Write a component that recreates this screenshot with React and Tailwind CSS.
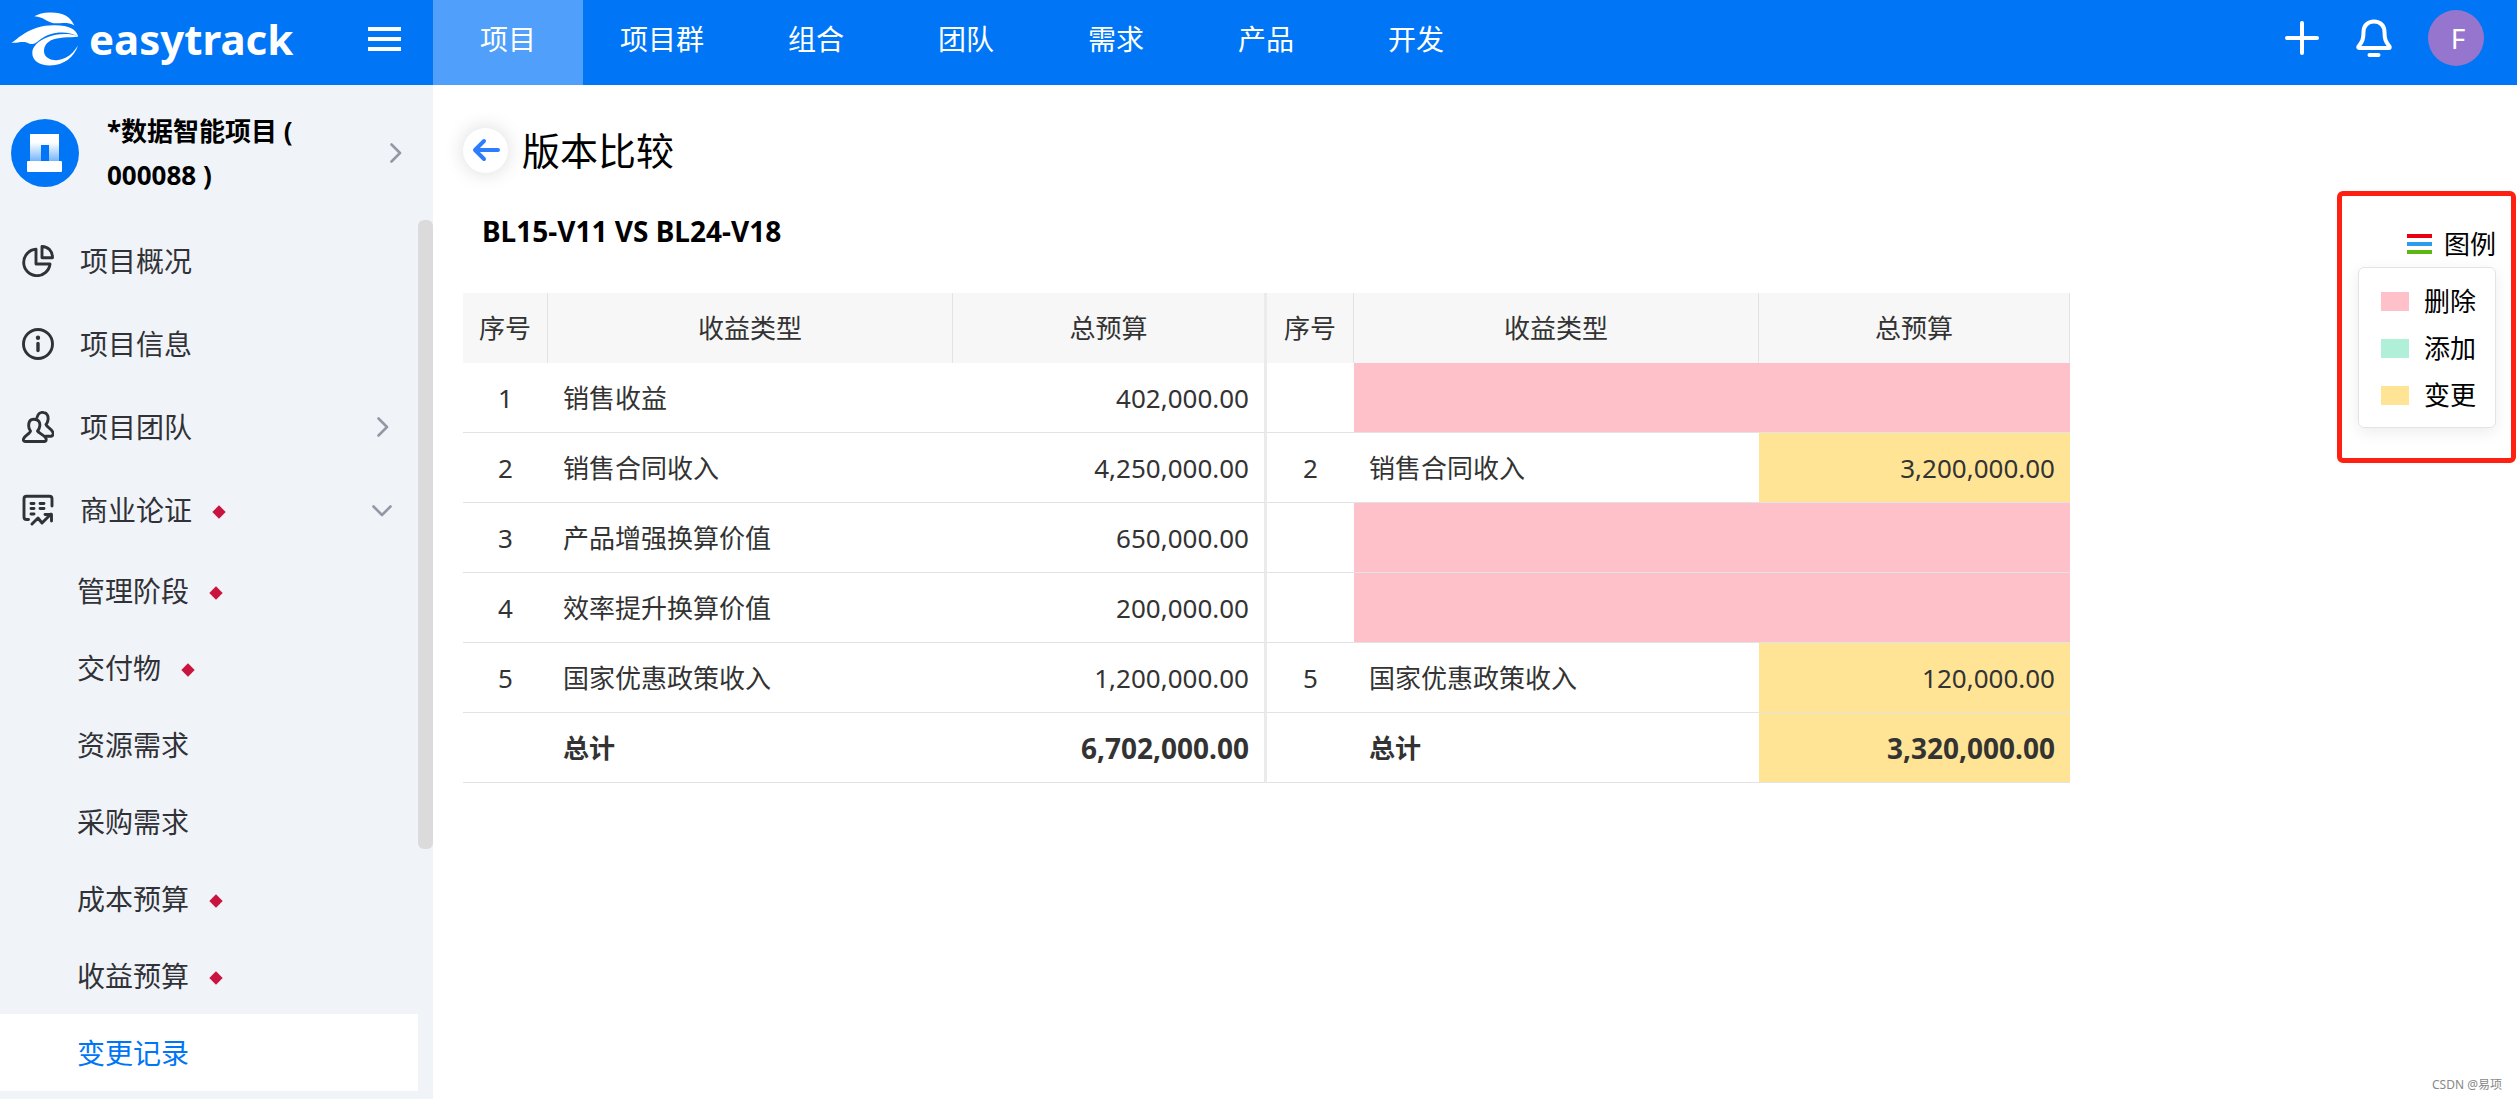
import { useState } from 'react';

const TABS = ['项目', '项目群', '组合', '团队', '需求', '产品', '开发'];

const SUB_ITEMS = [
  { label: '管理阶段', flagged: true },
  { label: '交付物', flagged: true },
  { label: '资源需求' },
  { label: '采购需求' },
  { label: '成本预算', flagged: true },
  { label: '收益预算', flagged: true },
  { label: '变更记录' },
];

const ROWS = [
  { no: 1, type: '销售收益', left: '402,000.00', state: 'deleted' },
  { no: 2, type: '销售合同收入', left: '4,250,000.00', right: '3,200,000.00', state: 'changed' },
  { no: 3, type: '产品增强换算价值', left: '650,000.00', state: 'deleted' },
  { no: 4, type: '效率提升换算价值', left: '200,000.00', state: 'deleted' },
  { no: 5, type: '国家优惠政策收入', left: '1,200,000.00', right: '120,000.00', state: 'changed' },
];

const LEGEND = [
  { label: '删除', color: 'bg-[#ffc1c9]' },
  { label: '添加', color: 'bg-[#b0f0d9]' },
  { label: '变更', color: 'bg-[#ffe496]' },
];

const LogoMark = () => (
  <svg viewBox="0 0 68 54" className="w-[68px] h-[54px]" fill="#fff" aria-hidden="true">
    <path d="M23.300 4.300C28 1.500 33 .3 40 .5 52 .7 59 4 63.300 13.500 60 11.500 57 11 53 11c-5 0-8 1-13-.5C35 9 33 5.500 23.300 4.300z" />
    <path d="M.5 30.700C5 28 7 25.500 12.300 22.300 22 16 31 13.500 42.300 13.300 58 13 65 17 67.300 24.700 62 21.500 57 20.500 51 20.500 42 20.500 36 23 30.700 26.500 27 29 25 31.500 22 32 18 32.500 17 30 12 30 8 30 5 31 .5 30.700z" />
    <path d="M67.300 24.700C63 22.500 58 22 54 22 47 22 42 23 37 25 27 29 21.300 34.500 21.300 41 21.300 48.500 28 53.500 39 53.500 53 53.500 63.500 44.500 67 33.500 63.500 39 60 43 54.500 45.800 50 48 46 48.500 43 48 36.500 47.500 33 43.500 33 39 33 34 36 30.500 40 28.300 47 24.800 58 25.500 67.300 24.700z" />
  </svg>
);

const ProjectMark = () => (
  <svg viewBox="0 0 68 68" className="w-[68px] h-[68px] shrink-0" aria-hidden="true">
    <defs>
      <linearGradient id="tower" x1="0" y1="0" x2="0" y2="1">
        <stop offset="0.300" stopColor="#fff" />
        <stop offset="1" stopColor="#6fb1fb" />
      </linearGradient>
    </defs>
    <circle cx="34" cy="34" r="34" fill="#0076f7" />
    <path d="M19 15h29v28h-10V26h-8v17H19z" fill="url(#tower)" />
    <rect x="16" y="42" width="35" height="11" rx="1" fill="#fff" />
  </svg>
);

const iconProps = {
  viewBox: '0 0 32 32',
  className: 'w-8 h-8 shrink-0',
  fill: 'none',
  stroke: '#303237',
  strokeWidth: 2.9,
  strokeLinecap: 'round',
  strokeLinejoin: 'round',
  'aria-hidden': true,
};

const PieIcon = () => (
  <svg {...iconProps}>
    <path d="M14 4.300A13.200 13.200 0 1 0 28 19H14z" />
    <path d="M20 1.500v11.300h10.500C30.500 6 26 1.500 20 1.500z" />
  </svg>
);

const InfoIcon = () => (
  <svg {...iconProps}>
    <circle cx="16" cy="16" r="14.500" />
    <path d="M16 15.500v7" strokeWidth="3.400" />
    <circle cx="16" cy="9.800" r="2.200" fill="#303237" stroke="none" />
  </svg>
);

const TeamIcon = () => (
  <svg {...iconProps}>
    <path d="M8.500 20C6 17.500 6.500 12.500 7.500 10.500 9 7.500 15 7.500 17 10.500c1.500 2.500 1 7-1.500 9.500 1 2 7.500 4.500 8.500 7.500.5 1.500 0 3-1.500 3H3C1 30.500 1 28.500 2 27c1.500-2.500 6.500-5 6.500-7z" />
    <path d="M15 6.500C16 2.500 19 1 21.500 1.500c4 .5 5 4 4.500 7.500-.3 2-1 3.500-2 4.500 1 3 6 4.500 7 8 .6 2-.3 3.500-2 3.700L24 25.300" />
  </svg>
);

const CaseIcon = () => (
  <svg {...iconProps}>
    <path d="M6.500 25.500H4.500c-1.500 0-2.500-1-2.500-2.500V5c0-1.700 1-2.700 2.500-2.700h23c1.500 0 2.500 1 2.500 2.700v7" />
    <path d="M9 9.500h3M18 9.500h4M9 14.500h3M18 14.500h4M9 20h3" />
    <path d="M10 30l6-6 4 5 9-9M23 20.500h6.500V27" />
  </svg>
);

const NAV_ITEMS = [
  { label: '项目概况', icon: PieIcon },
  { label: '项目信息', icon: InfoIcon },
  { label: '项目团队', icon: TeamIcon, arrow: 'right' },
  { label: '商业论证', icon: CaseIcon, arrow: 'down', flagged: true },
];

const Chevron = ({ down }) => (
  <svg viewBox="0 0 20 20" className={`w-5 h-5 shrink-0 ${down ? 'rotate-90' : ''}`} fill="none"
    stroke="#9498a6" strokeWidth="2.600" strokeLinecap="round" strokeLinejoin="round" aria-hidden="true">
    <path d="M6.500 1.500L15 10 6.500 18.500" />
  </svg>
);

const Diamond = () => (
  <svg viewBox="0 0 14 14" className="w-[14px] h-[14px] ml-5 mt-1" fill="#c8143f" aria-hidden="true">
    <path d="M7 0.300L13.700 7 7 13.700 0.300 7z" />
  </svg>
);

const Header = () => {
  const [tab, setTab] = useState('项目');
  return (
    <header className="flex h-[85px] bg-[#0076f7] text-white">
      <div className="flex w-[433px] shrink-0 items-center justify-between pl-[11px] pr-8 pb-2">
        <a href="#" className="flex items-center gap-[10px]">
          <LogoMark />
          <span className="text-[42px] leading-[54px] font-bold">easytrack</span>
        </a>
        <button aria-label="菜单" className="flex w-[33px] flex-col gap-[6px]">
          <span className="h-1 w-full bg-white" />
          <span className="h-1 w-full bg-white" />
          <span className="h-1 w-full bg-white" />
        </button>
      </div>

      <nav className="flex flex-1">
        {TABS.map(t => (
          <button key={t} onClick={() => setTab(t)}
            className={`min-w-[150px] px-[37px] pb-2 text-[28px] ${t === tab ? 'bg-[#4f9ffb]' : ''}`}>
            {t}
          </button>
        ))}
      </nav>

      <div className="flex items-center pr-[33px] pb-[9px]">
        <button aria-label="新建">
          <svg viewBox="0 0 36 36" className="w-9 h-9" stroke="#fff" strokeWidth="4" strokeLinecap="round">
            <path d="M18 3v30M3 18h30" />
          </svg>
        </button>
        <button aria-label="通知" className="ml-9">
          <svg viewBox="0 0 36 38" className="w-9 h-[38px]" fill="none" stroke="#fff" strokeWidth="4" strokeLinecap="round" strokeLinejoin="round">
            <path d="M18 2.500C11.500 2.500 7.500 7 7.500 13c0 7-1 9.500-5 14.500C2 28.500 2.500 29 3 29h30c.6 0 1-.5.500-1.500-4-5-5-7.500-5-14.500 0-6-4-10.500-10.500-10.500z" />
            <path d="M13.500 36h9" />
          </svg>
        </button>
        <button className="ml-9 h-14 w-14 rounded-full bg-[#9575cd] pl-1 text-[28px] leading-[56px]">F</button>
      </div>
    </header>
  );
};

const Sidebar = () => {
  const [active, setActive] = useState('变更记录');
  return (
    <aside className="w-[433px] shrink-0 bg-[#f0f4f8] text-[#303237]">
      <div className="flex h-[135px] items-center pl-[11px] pr-7">
        <ProjectMark />
        <h2 className="ml-7 flex-1 text-[26px] leading-[44px] font-bold text-black">
          *数据智能项目 (<br />000088 )
        </h2>
        <Chevron />
      </div>

      <div className="flex">
        <nav className="flex flex-1 flex-col gap-px text-[28px]">
          {NAV_ITEMS.map(({ label, icon: Icon, arrow, flagged }) => (
            <a key={label} href="#" className="flex h-[82px] items-center pl-[22px] pr-[26px]">
              <Icon />
              <span className="ml-[26px]">{label}</span>
              {flagged && <Diamond />}
              <span className="flex-1" />
              {arrow && <Chevron down={arrow === 'down'} />}
            </a>
          ))}
          <ul>
            {SUB_ITEMS.map(({ label, flagged }) => (
              <li key={label}>
                <a href="#" onClick={() => setActive(label)}
                  className={`flex h-[77px] items-center pl-[77px] ${label === active ? 'bg-white text-[#0076f7]' : ''}`}>
                  {label}
                  {flagged && <Diamond />}
                </a>
              </li>
            ))}
          </ul>
        </nav>
        <div className="h-[629px] w-[15px] rounded-md bg-[#dbdbdb]" />
      </div>
    </aside>
  );
};

const CompareTable = () => {
  const head = 'border-r border-[#e3e3e3] bg-[#f7f7f7] font-normal';
  const cell = 'border-b border-[#e3e3e3] px-[15px]';
  const divider = 'border-r-3 border-r-[#ebebeb]';
  return (
    <table className="w-[1607px] max-w-full table-fixed border-separate border-spacing-0 text-[26px] leading-[38px] text-[#333]">
      <colgroup>
        <col className="w-[85px]" />
        <col className="w-[405px]" />
        <col className="w-[314px]" />
        <col className="w-[87px]" />
        <col className="w-[405px]" />
        <col className="w-[311px]" />
      </colgroup>
      <thead>
        <tr className="h-[70px]">
          <th className={head}>序号</th>
          <th className={head}>收益类型</th>
          <th className={`bg-[#f7f7f7] font-normal ${divider}`}>总预算</th>
          <th className={head}>序号</th>
          <th className={head}>收益类型</th>
          <th className={head}>总预算</th>
        </tr>
      </thead>
      <tbody>
        {ROWS.map(row => {
          const deleted = row.state === 'deleted';
          return (
            <tr key={row.no} className="h-[70px]">
              <td className={`${cell} text-center`}>{row.no}</td>
              <td className={cell}>{row.type}</td>
              <td className={`${cell} ${divider} text-right`}>{row.left}</td>
              <td className={`${cell} text-center`}>{deleted ? '' : row.no}</td>
              <td className={`${cell} ${deleted ? 'bg-[#ffc1c9]' : ''}`}>{deleted ? '' : row.type}</td>
              <td className={`${cell} text-right ${deleted ? 'bg-[#ffc1c9]' : 'bg-[#ffe496]'}`}>{row.right}</td>
            </tr>
          );
        })}
        <tr className="h-[70px] font-bold">
          <td className={cell} />
          <td className={cell}>总计</td>
          <td className={`${cell} ${divider} text-right text-[28px]`}>6,702,000.00</td>
          <td className={cell} />
          <td className={cell}>总计</td>
          <td className={`${cell} bg-[#ffe496] text-right text-[28px]`}>3,320,000.00</td>
        </tr>
      </tbody>
    </table>
  );
};

const Legend = () => (
  <section className="mt-[106px] mr-px shrink-0 self-start rounded-md border-5 border-[#ff2012] pt-7 pr-[15px] pb-[30px] pl-4 text-[26px] text-black">
    <button className="ml-auto flex h-10 items-center gap-3">
      <span className="flex w-[25px] flex-col gap-1">
        <span className="h-1 bg-[#e60012]" />
        <span className="h-1 bg-[#2b9cee]" />
        <span className="h-1 bg-[#5cb811]" />
      </span>
      图例
    </button>
    <ul className="mt-[3px] rounded-md border border-[#e3e3e3] pt-[10px] pb-2 pr-[19px] pl-[22px] shadow-[0_4px_16px_rgba(0,0,0,0.08)]">
      {LEGEND.map(({ label, color }) => (
        <li key={label} className="flex h-[47px] items-center gap-[15px]">
          <span className={`h-[19px] w-7 ${color}`} />
          {label}
        </li>
      ))}
    </ul>
  </section>
);

const App = () => (
  <div className="flex min-h-screen flex-col bg-white font-['Noto_Sans','Noto_Sans_CJK_SC',sans-serif]">
    <Header />
    <div className="flex flex-1">
      <Sidebar />
      <main className="relative flex flex-1 justify-between pl-[30px]">
        <div className="pt-[38px]">
          <div className="flex items-center gap-[14px]">
            <button aria-label="返回" className="flex h-[45px] w-[45px] items-center justify-center rounded-full bg-white shadow-[0_0_20px_rgba(0,0,0,0.15)]">
              <svg viewBox="0 0 28 24" className="w-7 h-6" fill="none" stroke="#2f7dff" strokeWidth="4" strokeLinecap="round" strokeLinejoin="round">
                <path d="M26 12H3M12 3L3 12l9 9" />
              </svg>
            </button>
            <h1 className="text-[38px] leading-[54px] text-black">版本比较</h1>
          </div>
          <p className="mt-[35px] mb-[43px] ml-[19px] text-[28px] leading-[38px] font-bold text-black">BL15-V11 VS BL24-V18</p>
          <CompareTable />
        </div>
        <Legend />
        <span className="absolute right-[15px] bottom-[6px] text-xs text-[#888]">CSDN @易项</span>
      </main>
    </div>
  </div>
);

export default App;
